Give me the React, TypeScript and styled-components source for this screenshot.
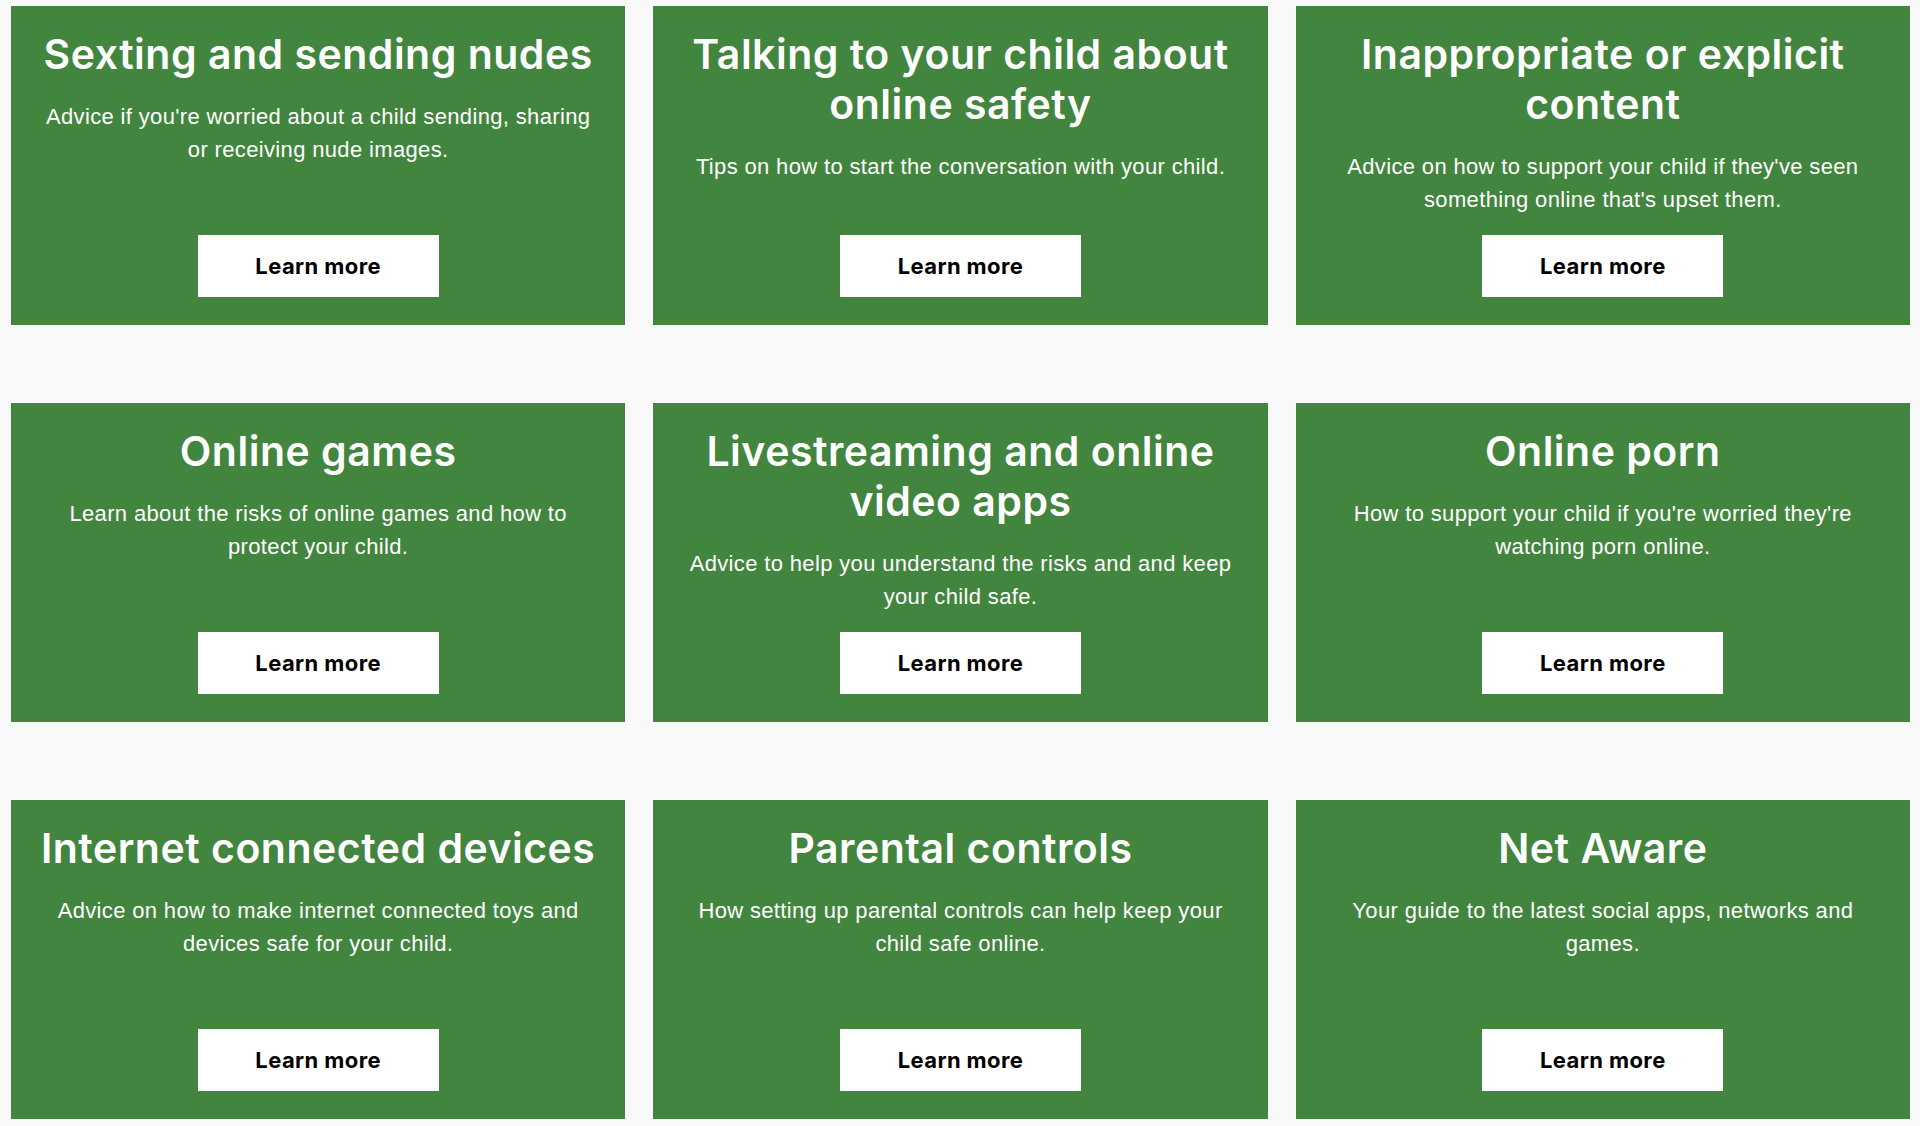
import React from 'react';
import styled, { createGlobalStyle } from 'styled-components';

/* ─── Data ──────────────────────────────────────────────────── */

interface Topic {
  title: string;
  text: string;
}

const topics: Topic[] = [
  {
    title: 'Sexting and sending nudes',
    text: "Advice if you're worried about a child sending, sharing or receiving nude images.",
  },
  {
    title: 'Talking to your child about online safety',
    text: 'Tips on how to start the conversation with your child.',
  },
  {
    title: 'Inappropriate or explicit content',
    text: "Advice on how to support your child if they've seen something online that's upset them.",
  },
  {
    title: 'Online games',
    text: 'Learn about the risks of online games and how to protect your child.',
  },
  {
    title: 'Livestreaming and online video apps',
    text: 'Advice to help you understand the risks and and keep your child safe.',
  },
  {
    title: 'Online porn',
    text: "How to support your child if you're worried they're watching porn online.",
  },
  {
    title: 'Internet connected devices',
    text: 'Advice on how to make internet connected toys and devices safe for your child.',
  },
  {
    title: 'Parental controls',
    text: 'How setting up parental controls can help keep your child safe online.',
  },
  {
    title: 'Net Aware',
    text: 'Your guide to the latest social apps, networks and games.',
  },
];

/* ─── Styled Components ─────────────────────────────────────── */

const GlobalStyle = createGlobalStyle`
  html, body {
    margin: 0;
    padding: 0;
    background: #f9f9f9;
  }
  * {
    box-sizing: border-box;
  }
`;

const Grid = styled.main`
  display: grid;
  grid-template-columns: repeat(3, 1fr);
  column-gap: 28px;
  row-gap: 78px;
  padding: 6px 10px 0 11px;
`;

const Card = styled.article`
  display: flex;
  flex-direction: column;
  align-items: center;
  min-height: 319px;
  padding: 23px 26px 28px;
  background: #42853e;
  color: #fff;
  text-align: center;
`;

const Title = styled.h2`
  margin: 0 0 21px;
  font-family: Inter, 'Open Sans', sans-serif;
  font-size: 41px;
  font-weight: 600;
  letter-spacing: 0.5px;
  line-height: 50px;
`;

const Text = styled.p`
  margin: 0 0 15px;
  max-width: 560px;
  font-family: 'Liberation Sans', Arial, sans-serif;
  font-size: 22px;
  letter-spacing: 0.35px;
  line-height: 33px;
`;

const LearnMore = styled.a`
  display: flex;
  align-items: center;
  justify-content: center;
  margin-top: auto;
  width: 241px;
  height: 62px;
  background: #fff;
  color: #000;
  font-family: Inter, 'Liberation Sans', sans-serif;
  font-size: 22px;
  font-weight: 700;
  letter-spacing: 0.4px;
  text-decoration: none;
  cursor: pointer;
`;

/* ─── Component ─────────────────────────────────────────────── */

export default function App() {
  return (
    <>
      <GlobalStyle />
      <Grid>
        {topics.map((t) => (
          <Card key={t.title}>
            <Title>{t.title}</Title>
            <Text>{t.text}</Text>
            <LearnMore href="#">Learn more</LearnMore>
          </Card>
        ))}
      </Grid>
    </>
  );
}
